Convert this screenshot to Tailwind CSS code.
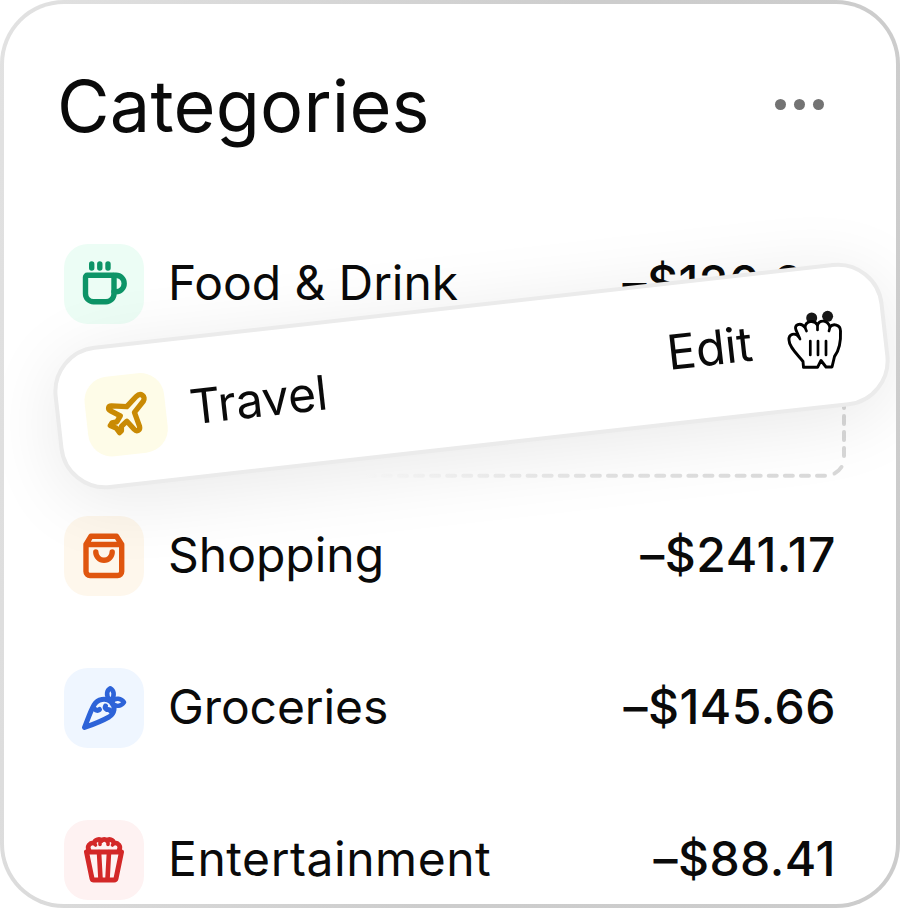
<!DOCTYPE html>
<html lang="en">
<head>
    <meta charset="UTF-8">
    <meta name="viewport" content="width=device-width, initial-scale=1.0">
    <title>Categories</title>
    <script src="https://cdn.jsdelivr.net/npm/@tailwindcss/browser@4"></script>
</head>
<body class="bg-white font-['Inter',sans-serif] text-[#0a0a0a]">
    <div class="w-[900px] h-[908px] rounded-[64px] p-1 bg-[linear-gradient(100deg,#e2e2e2_0%,#cdcdcd_55%,#cccccc_100%)]">
        <main class="relative h-full rounded-[60px] bg-white overflow-hidden">

            <header class="flex items-center justify-between h-[204px] pl-[53px] pr-[72px]">
                <h1 class="text-[72px] leading-[80px] tracking-[0.2px]">Categories</h1>
                <button class="flex gap-2 pb-1" aria-label="More">
                    <span class="size-[11px] rounded-full bg-[#737373]"></span>
                    <span class="size-[11px] rounded-full bg-[#737373]"></span>
                    <span class="size-[11px] rounded-full bg-[#737373]"></span>
                </button>
            </header>

            <ul class="pl-[60px] pr-[60px] text-5xl">
                <li class="flex items-center h-[152px]">
                    <div class="size-20 rounded-3xl bg-[#ecfdf5] text-[#0d9467] flex items-center justify-center">
                        <svg class="size-12" viewBox="0 0 48 48" fill="none" stroke="currentColor" stroke-width="5.4" stroke-linecap="round" stroke-linejoin="round">
                            <path d="M11.700 4V8M19.800 4V8M28 4V8" />
                            <path d="M5.500 17a1.700 1.700 0 0 1 1.700-1.700H32.300a1.700 1.700 0 0 1 1.700 1.700V33.700a8 8 0 0 1-8 8H13.500a8 8 0 0 1-8-8Z" />
                            <path d="M34 15.300h2a8.200 8.200 0 0 1 0 16.400h-2" />
                        </svg>
                    </div>
                    <span class="ml-6 pb-0.5 tracking-[-0.1px]">Food &amp; Drink</span>
                    <span class="ml-auto pb-0.5 font-medium tracking-[0.5px]">–$120.90</span>
                </li>

                <!-- empty drop slot -->
                <li class="h-[120px] -mr-3">
                    <svg class="w-full h-full" viewBox="0 0 784 120" fill="none" stroke="url(#slot)" stroke-width="4" stroke-linecap="round">
                        <defs>
                            <linearGradient id="slot" gradientUnits="userSpaceOnUse" x1="300" y1="0" x2="784" y2="0">
                                <stop offset="0" stop-color="#dadada" stop-opacity="0" />
                                <stop offset="0.5" stop-color="#dadada" stop-opacity="0.75" />
                                <stop offset="1" stop-color="#d8d8d8" />
                            </linearGradient>
                        </defs>
                        <path d="M780 8 780.010 98" stroke-dasharray="8 8" />
                        <path d="M777.500 107Q774.500 111.500 770.500 113.500" />
                        <path d="M761 115.700 24 115.710" stroke-dasharray="8 8.080" />
                    </svg>
                </li>

                <li class="flex items-center h-[152px]">
                    <div class="size-20 rounded-3xl bg-[#fef7ec] text-[#e0560f] flex items-center justify-center">
                        <svg class="size-12" viewBox="0 0 48 48" fill="none" stroke="currentColor" stroke-width="5.4" stroke-linecap="round" stroke-linejoin="round">
                            <path d="M6 12.500 11 4.200H36.500L41.700 12.500V39.500a4 4 0 0 1-4 4H10a4 4 0 0 1-4-4ZM6 12.500H41.700" />
                            <path d="M15.800 20a8.200 8.200 0 0 0 16.400 0" />
                        </svg>
                    </div>
                    <span class="ml-6 pb-0.5">Shopping</span>
                    <span class="ml-auto pb-0.5 font-medium tracking-[0.5px]">–$241.17</span>
                </li>

                <li class="flex items-center h-[152px]">
                    <div class="size-20 rounded-3xl bg-[#eff6ff] text-[#2d63d8] flex items-center justify-center">
                        <svg class="size-12" viewBox="0 0 48 48" fill="none" stroke="currentColor" stroke-width="5" stroke-linecap="round" stroke-linejoin="round">
                            <path d="M4.500 43.500C8 35 10.500 27 14 21 17.500 15 26 13.500 31 18 36 23 34.500 29.500 29 33 22 37 13 40.500 4.500 43.500Z" />
                            <path d="M14 24.500Q17 27.500 19.500 25.500M31 27.500Q29.500 25 27 25.500Q24.500 24 25.500 22" />
                            <path d="M29.500 15.500C25.500 11 27 6 30.300 4.200 34 6 35 11.500 31.500 16M32 17.500C35.500 13 41.500 14.500 44 18.200 41 22.500 36.500 22.500 33.500 20.500" stroke-width="4.600" />
                        </svg>
                    </div>
                    <span class="ml-6 pb-0.5 tracking-[-0.1px]">Groceries</span>
                    <span class="ml-auto pb-0.5 font-medium tracking-[0.5px]">–$145.66</span>
                </li>

                <li class="flex items-center h-[152px]">
                    <div class="size-20 rounded-3xl bg-[#fef2f2] text-[#d32828] flex items-center justify-center">
                        <svg class="size-12" viewBox="0 0 48 48" fill="none" stroke="currentColor" stroke-width="5" stroke-linecap="round" stroke-linejoin="round">
                            <path d="M6.500 16H41.500L36 42.500Q35.700 44 34.200 44H13.800Q12.300 44 12 42.500Z" />
                            <path d="M19 16 20.500 43M29 16 27.500 43" stroke-width="4.600" />
                            <path d="M9 14.500C6.500 10 10 6.500 14 7 15 3.500 19.500 2.500 21.500 4.500 23 3 25.500 3 27 4.500 29 2.500 33 3.500 34 7 38 6.500 41.500 10 39 14.500" stroke-width="4.800" />
                            <path d="M14 7 15.500 9M20 5V8.500M28 5V8.500M34 7 32.500 9" stroke-width="3.600" />
                        </svg>
                    </div>
                    <span class="ml-6 pb-0.5 tracking-[0.55px]">Entertainment</span>
                    <span class="ml-auto pb-0.5 font-medium tracking-[0.5px]">–$88.41</span>
                </li>
            </ul>

            <!-- row being dragged -->
            <div class="absolute left-[50px] top-[300px] w-[835px] h-[144px] rounded-[46px] border-4 border-[#ebebeb] bg-white -rotate-[6.4deg] flex items-center pl-[26px] text-5xl shadow-[0_12px_76px_rgba(0,0,0,0.09)]">
                <div class="size-20 rounded-3xl bg-[#fefce8] text-[#c98a04] flex items-center justify-center">
                    <svg class="size-12" viewBox="0 0 48 48" fill="none" stroke="currentColor" stroke-width="5.3" stroke-linecap="round" stroke-linejoin="round">
                        <path d="M25.500 16 36 7C41 3 46 8 42.500 12.500L32.500 22.500 36 37C36.500 41 32.500 42.500 30.500 39.500L24 30.500 18 35 17.500 39.500 15.500 41 12.500 36 7 33 9 30.500 14 30 18 24.500 9 18.500C6 16.500 7 13 10.500 13.500Z" />
                    </svg>
                </div>
                <span class="ml-6 pb-px">Travel</span>
                <span class="ml-auto mr-[131px] pb-[3px]">Edit</span>
            </div>

            <!-- grabbing cursor over the row's menu dots -->
            <svg class="absolute left-[776px] top-[296px] w-[72px] h-[76px]" viewBox="0 0 72 76">
                <circle cx="31.700" cy="18" r="5.500" fill="#171717" />
                <circle cx="47.600" cy="16.300" r="5.500" fill="#171717" />
                <path d="M23 61.500C17 54 9 47 9 40 8.500 34 15 32 19 37L16 30C13.500 25 20.500 21.500 25 27.500 25.500 20.500 34.500 19.500 37.500 25 39.500 19.500 47.500 19.500 50 27 53 23 60.500 24.500 60.500 31 61 42 59.500 50 54.500 56.500L52 67H46L41 60.500 37.500 67.300H23.500Z" fill="#fff" stroke="#000" stroke-width="2.900" stroke-linejoin="round" />
                <path d="M19 37 20 39M25 27.500 26.500 31M37.500 25V30M50 27 49 31M30.300 41V55M38 41V55M46 41V55" fill="none" stroke="#000" stroke-width="2.700" stroke-linecap="round" />
            </svg>
        </main>
    </div>
</body>
</html>
